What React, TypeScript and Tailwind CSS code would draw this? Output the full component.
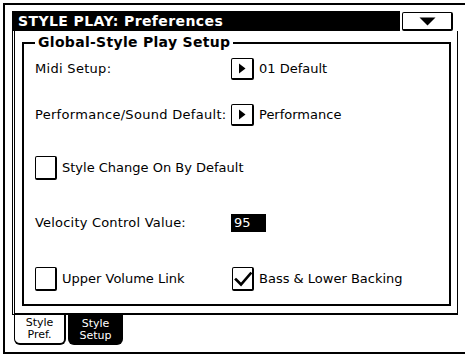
import React from 'react';

function ArrowButton() {
    return (
        <div className="w-[23px] h-[22px] border border-black border-r-2 border-b-2 rounded-[2px] flex items-center justify-center bg-white">
            <svg width="8" height="11" viewBox="0 0 8 11">
                <path d="M1 0.5 L7.5 5.5 L1 10.5 Z" fill="#000" />
            </svg>
        </div>
    );
}

function CheckBox({ checked = false }: { checked?: boolean }) {
    return (
        <div className="w-[22px] h-[24px] border border-black border-r-2 border-b-2 rounded-[2px] flex items-center justify-center bg-white shrink-0">
            {checked && (
                <svg width="18" height="16" viewBox="0 0 18 16">
                    <path d="M2 8.5 L7 13.5 L16.5 2.5" fill="none" stroke="#000" strokeWidth="2.6" strokeLinecap="square" />
                </svg>
            )}
        </div>
    );
}

export default function App() {
    return (
        <div className="w-[465px] h-[356px] bg-white overflow-hidden font-['DejaVu_Sans',sans-serif] text-black">
            <div className="mt-[3px] ml-[3px] h-[351px] border-t-2 border-l-2 border-b-2 border-black flex flex-col pl-[7px] pt-[6px]">
                {/* Header */}
                <div className="flex h-[20px]">
                    <div className="w-[388px] h-[20px] bg-black text-white font-bold text-[14px] leading-[20px] pl-[6px] tracking-[0.4px]">
                        STYLE PLAY: Preferences
                    </div>
                    <div className="ml-[2px] mt-[1px] w-[51px] h-[19px] border border-black border-r-2 border-b-2 rounded-[2px] flex items-center justify-center">
                        <svg width="17" height="9" viewBox="0 0 17 9">
                            <path d="M0.5 0.5 L16.5 0.5 L8.5 8.5 Z" fill="#000" />
                        </svg>
                    </div>
                </div>

                {/* Panel */}
                <div className="w-[446px] h-[284px] border-l-[3px] border-double border-r border-b-2 border-black pt-[11px] pl-[7px]">
                    <div className="relative w-[429px] h-[264px] border-2 border-black flex flex-col pt-[12px] pl-[11px] text-[13px]">
                        <div className="absolute left-[11px] top-[-11px] bg-white px-[3px] font-bold text-[14px] leading-[18px] tracking-[0.3px]">
                            Global-Style Play Setup
                        </div>

                        <div className="flex items-center h-[26px]">
                            <div className="w-[196px] tracking-[0.3px]">Midi Setup:</div>
                            <ArrowButton />
                            <div className="ml-[5px]">01 Default</div>
                        </div>

                        <div className="flex items-center h-[26px] mt-[20px]">
                            <div className="w-[196px] tracking-[0.3px]">Performance/Sound Default:</div>
                            <ArrowButton />
                            <div className="ml-[5px]">Performance</div>
                        </div>

                        <div className="flex items-center h-[26px] mt-[27px]">
                            <CheckBox />
                            <div className="ml-[5px]">Style Change On By Default</div>
                        </div>

                        <div className="flex items-center h-[26px] mt-[29px]">
                            <div className="w-[196px] tracking-[0.2px]">Velocity Control Value:</div>
                            <div className="w-[35px] h-[18px] bg-black text-white pl-[3px] leading-[18px]">95</div>
                        </div>

                        <div className="flex items-center h-[26px] mt-[30px]">
                            <div className="w-[197px] flex items-center">
                                <CheckBox />
                                <div className="ml-[5px]">Upper Volume Link</div>
                            </div>
                            <CheckBox checked />
                            <div className="ml-[5px]">Bass &amp; Lower Backing</div>
                        </div>
                    </div>
                </div>

                {/* Tabs */}
                <div className="flex h-[30px] text-[11px] leading-[12px] text-center">
                    <div className="ml-[2px] w-[52px] h-[30px] border-l border-r-2 border-b-2 border-black rounded-b-[6px] flex flex-col justify-center">
                        <span>Style</span>
                        <span>Pref.</span>
                    </div>
                    <div className="ml-[2px] w-[55px] h-[30px] bg-black text-white rounded-b-[6px] flex flex-col justify-center">
                        <span>Style</span>
                        <span>Setup</span>
                    </div>
                </div>
            </div>
        </div>
    );
}
